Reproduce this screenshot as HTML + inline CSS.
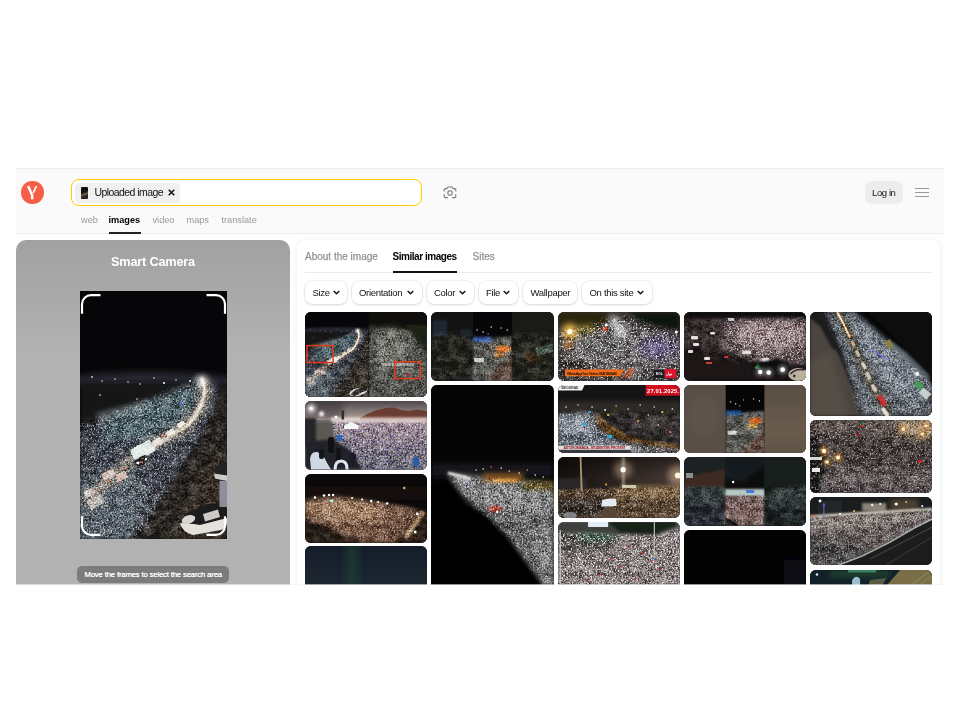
<!DOCTYPE html>
<html lang="en">
<head>
<meta charset="utf-8">
<title>Yandex Images</title>
<style>
*{box-sizing:border-box;margin:0;padding:0}
button{border:0;font-family:inherit;text-align:left;cursor:pointer;-webkit-appearance:none;appearance:none;display:block}
a{text-decoration:none;display:block}
html,body{width:960px;height:720px;overflow:hidden;background:#fff}
body{font-family:"Liberation Sans",sans-serif;color:#000;position:relative}
.abs{position:absolute}
#shot{position:absolute;left:16px;top:168px;width:928px;height:417px;background:#fff;overflow:hidden}
#header{position:absolute;left:0;top:0;width:928px;height:66px;background:#fafafa;box-shadow:inset 0 1px 0 #ececec,inset 0 -1px 0 #ececec}
#logo{position:absolute;left:5.4px;top:13.4px;width:22.4px;height:22.4px;border-radius:50%;background:#f75e48}
#search{position:absolute;left:55px;top:11px;width:350.5px;height:27px;border:1.8px solid #ffcc00;border-radius:8px;background:#fff}
#chip{position:absolute;left:59px;top:15px;width:105px;height:19.5px;border-radius:4px;background:#f0f0f0}
#chip .th{position:absolute;left:5.5px;top:3.5px;width:7.5px;height:12.5px;background:linear-gradient(160deg,#111 40%,#6a5a4a 60%,#222 75%);border-radius:1px}
#chip .tx{position:absolute;left:19.5px;top:3px;font-size:10.5px;line-height:12px;letter-spacing:-0.57px;white-space:nowrap;color:#111}
#chip .x{position:absolute;left:93px;top:5.5px;width:7px;height:7px}
.nav{position:absolute;top:46px;font-size:9.2px;line-height:12px;color:#999;white-space:nowrap}
.nav.on{color:#000;font-weight:bold}
#navline{position:absolute;left:92.5px;top:63.7px;width:32px;height:2px;background:#222}
#cam{position:absolute;left:427px;top:17.5px;width:14px;height:13px}
#login{position:absolute;left:848.5px;top:13px;width:38.5px;height:22.5px;border-radius:7px;background:#ededed;font-size:9.5px;line-height:23.5px;text-align:center;letter-spacing:-0.4px;color:#111}
.hb{position:absolute;left:899px;width:13.5px;height:1.2px;background:#999}
#left{position:absolute;left:0;top:72px;width:274px;height:345px;border-radius:10px 10px 0 0;background:linear-gradient(#a1a1a1 0,#b2b2b2 112px,#b2b2b2 100%)}
#left h1{position:absolute;left:0;width:274px;top:14px;text-align:center;font-size:12.7px;line-height:16px;font-weight:bold;color:#fff;letter-spacing:-0.18px}
#photo{position:absolute;left:64px;top:51px;width:147px;height:248px;background:#0a0a0c;overflow:hidden}
#tip{position:absolute;left:61px;top:326px;width:152.4px;height:17px;border-radius:5px;background:#7c7c7c;color:#fff;font-size:7.7px;line-height:17px;text-align:center;white-space:nowrap;letter-spacing:-0.15px;text-shadow:0 0 .4px #fff}
#right{position:absolute;left:281px;top:72px;width:643px;height:360px;border-radius:9px 9px 0 0;background:#fff;box-shadow:0 0 5px rgba(40,70,120,.10)}
.tab{position:absolute;top:11.2px;font-size:10px;line-height:12px;color:#929292;white-space:nowrap;-webkit-text-stroke:.25px #929292}
.tab.on{color:#000;font-weight:bold;letter-spacing:-0.46px;-webkit-text-stroke:0}
#tabline{position:absolute;left:95.5px;top:30.5px;width:64.5px;height:2px;background:#111}
#divider{position:absolute;left:8px;top:31.7px;width:627px;height:1px;background:#ebebeb}
.f{position:absolute;top:41.2px;height:23px;border-radius:7px;background:#fff;box-shadow:0 0 0 .5px rgba(0,0,0,.08),0 1px 3px rgba(0,0,0,.12);font-size:9.5px;line-height:22px;white-space:nowrap;color:#111;letter-spacing:-0.3px;padding-left:7.5px}
.f svg{position:absolute;right:7.5px;top:8.6px;width:7px;height:5px}
#botline{position:absolute;left:0;bottom:0;width:928px;height:1px;background:rgba(238,243,251,.62)}
.im{position:absolute;width:122.3px;border-radius:6px;overflow:hidden;background:#181818}
</style>
</head>
<body>

<svg width="0" height="0" style="position:absolute;left:0;top:0" aria-hidden="true">
<defs>
<filter id="b05" x="-50%" y="-50%" width="200%" height="200%"><feGaussianBlur stdDeviation="0.5"/></filter>
<filter id="b1" x="-50%" y="-50%" width="200%" height="200%"><feGaussianBlur stdDeviation="1"/></filter>
<filter id="b2" x="-50%" y="-50%" width="200%" height="200%"><feGaussianBlur stdDeviation="2"/></filter>
<filter id="b3" x="-50%" y="-50%" width="200%" height="200%"><feGaussianBlur stdDeviation="3"/></filter>
<filter id="b5" x="-60%" y="-60%" width="220%" height="220%"><feGaussianBlur stdDeviation="5"/></filter>
<filter id="b8" x="-80%" y="-80%" width="260%" height="260%"><feGaussianBlur stdDeviation="8"/></filter>
<filter id="nz" x="0" y="0" width="100%" height="100%" color-interpolation-filters="sRGB"><feTurbulence type="fractalNoise" baseFrequency="0.62" numOctaves="2" seed="4"/><feColorMatrix values="1.9 0 0 0 -0.45  1.9 0 0 0 -0.45  1.9 0 0 0 -0.45  0 0 0 0 1"/><feGaussianBlur stdDeviation="0.45"/></filter>
<filter id="sp" x="0" y="0" width="100%" height="100%" color-interpolation-filters="sRGB"><feTurbulence type="fractalNoise" baseFrequency="0.55" numOctaves="2" seed="9"/><feColorMatrix values="0 0 0 0 1  0 0 0 0 1  0 0 0 0 1  9 0 0 0 -5.15"/><feGaussianBlur stdDeviation="0.6"/></filter>
<filter id="nzc" x="0" y="0" width="100%" height="100%" color-interpolation-filters="sRGB"><feTurbulence type="fractalNoise" baseFrequency="0.6" numOctaves="2" seed="17"/><feColorMatrix values="1.7 0.3 0 0 -0.55  1.5 0.5 0 0 -0.56  1.25 0 0.85 0 -0.58  0 0 0 0 1"/><feGaussianBlur stdDeviation="0.45"/></filter>
<filter id="nzl" x="0" y="0" width="100%" height="100%" color-interpolation-filters="sRGB"><feTurbulence type="fractalNoise" baseFrequency="0.11 0.16" numOctaves="2" seed="31"/><feColorMatrix values="2.6 0 0 0 -0.8  2.6 0 0 0 -0.8  2.6 0 0 0 -0.8  0 0 0 0 1"/></filter>
<filter id="nz2" x="0" y="0" width="100%" height="100%" color-interpolation-filters="sRGB"><feTurbulence type="fractalNoise" baseFrequency="0.5" numOctaves="2" seed="11"/><feColorMatrix values="3.2 0 0 0 -1.1  3.2 0 0 0 -1.1  3.2 0 0 0 -1.1  0 0 0 0 1"/></filter>
<filter id="nz3" x="0" y="0" width="100%" height="100%" color-interpolation-filters="sRGB"><feTurbulence type="fractalNoise" baseFrequency="0.7" numOctaves="2" seed="23"/><feColorMatrix values="1.9 0 0 0 -0.45  1.9 0 0 0 -0.45  1.9 0 0 0 -0.45  0 0 0 0 1"/><feGaussianBlur stdDeviation="0.45"/></filter>
</defs>
</svg>

<div id="shot">
  <header id="header">
    <div id="logo"><svg viewBox="0 0 22.6 22.6" width="22.4" height="22.4" style="display:block"><path d="M7.2 5.1 L11.25 14.5 L11.25 18.5" fill="none" stroke="#fff" stroke-width="2.5" stroke-linejoin="miter"/><path d="M15.6 5.2 L12.3 11.9" fill="none" stroke="#fff" stroke-width="1.75"/></svg></div>
    <div id="search"></div>
    <div id="chip"><div class="th"></div><div class="tx">Uploaded image</div>
      <svg class="x" viewBox="0 0 7 7"><path d="M.7 .7 L6.3 6.3 M6.3 .7 L.7 6.3" stroke="#111" stroke-width="1.5" fill="none"/></svg></div>
    <a class="nav" style="left:65px">web</a>
    <a class="nav on" style="left:92.5px">images</a>
    <a class="nav" style="left:136.5px">video</a>
    <a class="nav" style="left:170.5px">maps</a>
    <a class="nav" style="left:205.5px">translate</a>
    <div id="navline"></div>
    <svg id="cam" viewBox="0 0 14 13"><g fill="none" stroke="#777" stroke-width="1.1" stroke-linecap="round" stroke-linejoin="round"><path d="M1.2 5 V3.8 Q1.2 2.6 2.4 2.6 H3.8 L5 1 H9 L10.2 2.6 H11.6 Q12.8 2.6 12.8 3.8 V5"/><path d="M1.2 8.6 V10.4 Q1.2 11.6 2.4 11.6 H4.4"/><path d="M12.8 8.6 V10.4 Q12.8 11.6 11.6 11.6 H9.6"/><circle cx="7" cy="7" r="2.2"/></g></svg>
    <button id="login" type="button">Log in</button>
    <div class="hb" style="top:19.8px"></div><div class="hb" style="top:24px"></div><div class="hb" style="top:28.2px"></div>
  </header>
  <section id="left">
    <h1>Smart Camera</h1>
    <div id="photo"><svg viewBox="0 0 147 248" width="147" height="248" preserveAspectRatio="none" ><rect width="147" height="248" fill="#060608"/><ellipse cx="70" cy="90" rx="85" ry="9" fill="#262830" filter="url(#b3)"/><rect x="0" y="92" width="120" height="45" fill="#121418" filter="url(#b2)"/><polygon points="0,138 30,128 66,114 100,98 120,88 136,92 140,110 130,132 118,152 100,178 80,205 62,248 0,248" fill="#383d47" filter="url(#b3)"/><polygon points="30,126 100,98 118,96 112,120 70,148 20,150" fill="#4b646b" filter="url(#b3)" opacity=".8"/><polygon points="16,122 70,108 74,117 20,132" fill="#7c888c" filter="url(#b2)" opacity=".55"/><polygon points="0,190 50,176 70,200 52,248 0,248" fill="#59636b" filter="url(#b3)" opacity=".8"/><polygon points="147,96 147,248 52,248 72,216 98,182 120,150 136,116 140,98" fill="#2b2521" filter="url(#b2)"/><polygon points="147,150 147,248 90,248 110,200" fill="#3a332c" filter="url(#b3)" opacity=".8"/><path d="M128,100 L122,128 L104,160 L82,192 L60,235" stroke="#3c4048" stroke-width="10" fill="none" filter="url(#b2)"/><path d="M121,88 Q130,100 118,120 T88,146 T50,170 T4,212" stroke="#a39684" stroke-width="11" fill="none" filter="url(#b3)" opacity=".75"/><path d="M121,87 Q129,99 119,118 T100,138" stroke="#fff6e6" stroke-width="3.2" fill="none" filter="url(#b1)"/><path d="M100,138 Q88,148 70,158" stroke="#e8dccb" stroke-width="4" fill="none" filter="url(#b1)" opacity=".9"/><circle cx="121" cy="90" r="5" fill="#fff" filter="url(#b3)" opacity=".9"/><circle cx="12" cy="86" r="0.9" fill="#cfd6e6"/><circle cx="22" cy="90" r="0.8" fill="#e8e0c8"/><circle cx="35" cy="88" r="0.7" fill="#fff"/><circle cx="48" cy="91" r="0.8" fill="#d8e0ff"/><circle cx="60" cy="93" r="0.8" fill="#ffe8c0"/><circle cx="74" cy="87" r="0.7" fill="#fff"/><circle cx="84" cy="92" r="1" fill="#fff"/><circle cx="96" cy="89" r="0.8" fill="#ffe0c0"/><circle cx="110" cy="90" r="1" fill="#fff"/><circle cx="101" cy="112" r="1.2" fill="#6a7cff"/><circle cx="78" cy="118" r="1" fill="#fff"/><circle cx="57" cy="108" r="0.8" fill="#ffd8a0"/><circle cx="20" cy="104" r="0.8" fill="#fff"/><circle cx="38" cy="120" r="0.8" fill="#fff"/><rect x="51" y="153" width="23" height="13" rx="1.5" fill="#dfe9e4" transform="rotate(-30 62.5 159.5)" filter="url(#b05)"/><rect x="55" y="166" width="13" height="8" rx="1.5" fill="#1a1e1e" transform="rotate(-30 61.5 170.0)" filter="url(#b05)"/><rect x="22" y="180" width="13" height="7" rx="1.5" fill="#d8c4bc" transform="rotate(-25 28.5 183.5)" filter="url(#b05)"/><rect x="36" y="182" width="11" height="7" rx="1.5" fill="#d0b8b0" transform="rotate(-25 41.5 185.5)" filter="url(#b05)"/><rect x="4" y="198" width="11" height="7" rx="1.5" fill="#c4bcb8" transform="rotate(-25 9.5 201.5)" filter="url(#b05)"/><rect x="8" y="206" width="16" height="10" rx="1.5" fill="#b8b4b0" transform="rotate(-30 16.0 211.0)" filter="url(#b05)"/><rect x="72" y="148" width="10" height="6" rx="1.5" fill="#e8e4dc" transform="rotate(-30 77.0 151.0)" filter="url(#b05)"/><rect x="86" y="139" width="9" height="5" rx="1.5" fill="#efe9e0" transform="rotate(-32 90.5 141.5)" filter="url(#b05)"/><rect x="97" y="131" width="8" height="5" rx="1.5" fill="#f4eee4" transform="rotate(-35 101.0 133.5)" filter="url(#b05)"/><circle cx="28" cy="190" r="1.1" fill="#ff5a48"/><circle cx="40" cy="192" r="1.1" fill="#ff5a48"/><circle cx="44" cy="178" r="1.1" fill="#ff5a48"/><circle cx="62" cy="171" r="1.1" fill="#ff5a48"/><circle cx="82" cy="145" r="1.1" fill="#ff5a48"/><circle cx="16" cy="200" r="1.1" fill="#ff5a48"/><circle cx="58" cy="172" r="1.4" fill="#fff"/><circle cx="66" cy="168" r="1.2" fill="#fff"/><mask id="nm19" maskUnits="userSpaceOnUse" x="-10" y="-10" width="400" height="400"><g fill="#fff" stroke="#fff" stroke-width="0" filter="url(#b3)"><polygon points="0,132 40,120 100,96 124,88 138,100 126,140 96,182 60,248 0,248"/></g></mask><g mask="url(#nm19)" style="mix-blend-mode:overlay" opacity="0.648"><rect width="100%" height="100%" filter="url(#nz)"/></g><g mask="url(#nm19)" style="mix-blend-mode:soft-light" opacity="0.45"><rect width="100%" height="100%" filter="url(#nzl)"/></g><g mask="url(#nm19)" opacity="0.5"><rect width="100%" height="100%" filter="url(#sp)"/></g><mask id="nm20" maskUnits="userSpaceOnUse" x="-10" y="-10" width="400" height="400"><g fill="#fff" stroke="#fff" stroke-width="0" filter="url(#b3)"><polygon points="147,96 147,248 52,248 98,182 136,116"/></g></mask><g mask="url(#nm20)" style="mix-blend-mode:overlay" opacity="0.504"><rect width="100%" height="100%" filter="url(#nz2)"/></g><g mask="url(#nm20)" style="mix-blend-mode:soft-light" opacity="0.45"><rect width="100%" height="100%" filter="url(#nzl)"/></g><g filter="url(#b05)"><path d="M100,232 Q102,241 113,244 L141,239 Q147,237 147,231 L147,226 L120,233 Z" fill="#e4e0dc"/><path d="M101,231 Q104,221 116,218 L128,213 Q138,211 147,215 L147,227 L120,234 Z" fill="#1e1c1e"/><ellipse cx="108.500" cy="228.500" rx="7" ry="4.2" transform="rotate(-18 108.5 228.5)" fill="#d8d4d0"/><path d="M123,223 L138,218.500 L140,226 L125,230.500 Z" fill="#cfcac6"/><path d="M134,179 Q138,172 147,171 L147,188 L136,186 Z" fill="#242224"/><path d="M134,182.500 L147,184.500 L147,190 L135,187.500 Z" fill="#d0ccc8"/><rect x="139.500" y="190" width="8" height="26" fill="#9a98a6" opacity=".9"/></g><path d="M2,22.8 V13 A9 9 0 0 1 11,4.2 H20.5" fill="none" stroke="#fff" stroke-width="2.2" stroke-linecap="butt"/><path d="M126.5,4.2 H136 A9 9 0 0 1 145,13 V22.8" fill="none" stroke="#fff" stroke-width="2.2" stroke-linecap="butt"/><path d="M2,225.2 V235 A9 9 0 0 0 11,243.8 H20.5" fill="none" stroke="#fff" stroke-width="2.2" stroke-linecap="butt"/><path d="M126.5,243.8 H136 A9 9 0 0 0 145,235 V225.2" fill="none" stroke="#fff" stroke-width="2.2" stroke-linecap="butt"/></svg></div>
    <div id="tip">Move the frames to select the search area</div>
  </section>
  <main id="right">
    <a class="tab" style="left:8px">About the image</a>
    <a class="tab on" style="left:95.5px">Similar images</a>
    <a class="tab" style="left:175.5px">Sites</a>
    <div id="divider"></div><div id="tabline"></div>
    <button class="f" type="button" style="left:8px;width:42px">Size<svg viewBox="0 0 7 5"><path d="M.7 .9 L3.5 3.8 L6.3 .9" fill="none" stroke="#111" stroke-width="1.4"/></svg></button>
    <button class="f" type="button" style="left:54.5px;width:70px">Orientation<svg viewBox="0 0 7 5"><path d="M.7 .9 L3.5 3.8 L6.3 .9" fill="none" stroke="#111" stroke-width="1.4"/></svg></button>
    <button class="f" type="button" style="left:129.5px;width:47px">Color<svg viewBox="0 0 7 5"><path d="M.7 .9 L3.5 3.8 L6.3 .9" fill="none" stroke="#111" stroke-width="1.4"/></svg></button>
    <button class="f" type="button" style="left:181.5px;width:39px">File<svg viewBox="0 0 7 5"><path d="M.7 .9 L3.5 3.8 L6.3 .9" fill="none" stroke="#111" stroke-width="1.4"/></svg></button>
    <button class="f" type="button" style="left:226px;width:53.5px">Wallpaper</button>
    <button class="f" type="button" style="left:285px;width:69.5px">On this site<svg viewBox="0 0 7 5"><path d="M.7 .9 L3.5 3.8 L6.3 .9" fill="none" stroke="#111" stroke-width="1.4"/></svg></button>
<div class="im" style="left:8px;top:72px;height:85.3px"><svg viewBox="0 0 122 85.3" width="122" height="85.3" preserveAspectRatio="none" style="display:block;width:122.3px;height:85.3px"><rect width="122" height="85.5" fill="#0b0b0d"/><svg x="0" y="0" width="63.5" height="85.5" viewBox="0 46 147 198" preserveAspectRatio="xMidYMid slice"><rect width="147" height="248" fill="#060608"/><ellipse cx="70" cy="90" rx="85" ry="9" fill="#262830" filter="url(#b3)"/><rect x="0" y="92" width="120" height="45" fill="#121418" filter="url(#b2)"/><polygon points="0,138 30,128 66,114 100,98 120,88 136,92 140,110 130,132 118,152 100,178 80,205 62,248 0,248" fill="#383d47" filter="url(#b3)"/><polygon points="30,126 100,98 118,96 112,120 70,148 20,150" fill="#4b646b" filter="url(#b3)" opacity=".8"/><polygon points="16,122 70,108 74,117 20,132" fill="#7c888c" filter="url(#b2)" opacity=".55"/><polygon points="0,190 50,176 70,200 52,248 0,248" fill="#59636b" filter="url(#b3)" opacity=".8"/><polygon points="147,96 147,248 52,248 72,216 98,182 120,150 136,116 140,98" fill="#2b2521" filter="url(#b2)"/><polygon points="147,150 147,248 90,248 110,200" fill="#3a332c" filter="url(#b3)" opacity=".8"/><path d="M128,100 L122,128 L104,160 L82,192 L60,235" stroke="#3c4048" stroke-width="10" fill="none" filter="url(#b2)"/><path d="M121,88 Q130,100 118,120 T88,146 T50,170 T4,212" stroke="#a39684" stroke-width="11" fill="none" filter="url(#b3)" opacity=".75"/><path d="M121,87 Q129,99 119,118 T100,138" stroke="#fff6e6" stroke-width="3.2" fill="none" filter="url(#b1)"/><path d="M100,138 Q88,148 70,158" stroke="#e8dccb" stroke-width="4" fill="none" filter="url(#b1)" opacity=".9"/><circle cx="121" cy="90" r="5" fill="#fff" filter="url(#b3)" opacity=".9"/><circle cx="12" cy="86" r="0.9" fill="#cfd6e6"/><circle cx="22" cy="90" r="0.8" fill="#e8e0c8"/><circle cx="35" cy="88" r="0.7" fill="#fff"/><circle cx="48" cy="91" r="0.8" fill="#d8e0ff"/><circle cx="60" cy="93" r="0.8" fill="#ffe8c0"/><circle cx="74" cy="87" r="0.7" fill="#fff"/><circle cx="84" cy="92" r="1" fill="#fff"/><circle cx="96" cy="89" r="0.8" fill="#ffe0c0"/><circle cx="110" cy="90" r="1" fill="#fff"/><circle cx="101" cy="112" r="1.2" fill="#6a7cff"/><circle cx="78" cy="118" r="1" fill="#fff"/><circle cx="57" cy="108" r="0.8" fill="#ffd8a0"/><circle cx="20" cy="104" r="0.8" fill="#fff"/><circle cx="38" cy="120" r="0.8" fill="#fff"/><rect x="51" y="153" width="23" height="13" rx="1.5" fill="#dfe9e4" transform="rotate(-30 62.5 159.5)" filter="url(#b05)"/><rect x="55" y="166" width="13" height="8" rx="1.5" fill="#1a1e1e" transform="rotate(-30 61.5 170.0)" filter="url(#b05)"/><rect x="22" y="180" width="13" height="7" rx="1.5" fill="#d8c4bc" transform="rotate(-25 28.5 183.5)" filter="url(#b05)"/><rect x="36" y="182" width="11" height="7" rx="1.5" fill="#d0b8b0" transform="rotate(-25 41.5 185.5)" filter="url(#b05)"/><rect x="4" y="198" width="11" height="7" rx="1.5" fill="#c4bcb8" transform="rotate(-25 9.5 201.5)" filter="url(#b05)"/><rect x="8" y="206" width="16" height="10" rx="1.5" fill="#b8b4b0" transform="rotate(-30 16.0 211.0)" filter="url(#b05)"/><rect x="72" y="148" width="10" height="6" rx="1.5" fill="#e8e4dc" transform="rotate(-30 77.0 151.0)" filter="url(#b05)"/><rect x="86" y="139" width="9" height="5" rx="1.5" fill="#efe9e0" transform="rotate(-32 90.5 141.5)" filter="url(#b05)"/><rect x="97" y="131" width="8" height="5" rx="1.5" fill="#f4eee4" transform="rotate(-35 101.0 133.5)" filter="url(#b05)"/><circle cx="28" cy="190" r="1.1" fill="#ff5a48"/><circle cx="40" cy="192" r="1.1" fill="#ff5a48"/><circle cx="44" cy="178" r="1.1" fill="#ff5a48"/><circle cx="62" cy="171" r="1.1" fill="#ff5a48"/><circle cx="82" cy="145" r="1.1" fill="#ff5a48"/><circle cx="16" cy="200" r="1.1" fill="#ff5a48"/><circle cx="58" cy="172" r="1.4" fill="#fff"/><circle cx="66" cy="168" r="1.2" fill="#fff"/><ellipse cx="123" cy="231" rx="21" ry="9" transform="rotate(-14 123 231)" fill="#d9d6d2"/><path d="M106,236 Q118,222 140,218 L146,226 Q130,232 112,242 Z" fill="#2a2626"/></svg><rect x="63.5" y="0" width="58.5" height="85.5" fill="#100e0c"/><polygon points="63.5,17 122,17 122,85.5 63.5,85.5" fill="#4e4e48" filter="url(#b1)"/><polygon points="74,16 94,16 104,40 100,66 72,56 68,30" fill="#787870" filter="url(#b3)" opacity=".7"/><polygon points="100,13 122,13 122,44 112,30" fill="#1c2418" filter="url(#b1)"/><polygon points="63.5,13 72,13 66,24 63.5,28" fill="#2a2a26" filter="url(#b1)"/><rect x="63" y="0" width="1" height="85.5" fill="#0a0a0a" opacity=".6"/><mask id="nm1" maskUnits="userSpaceOnUse" x="-10" y="-10" width="400" height="400"><g fill="#fff" stroke="#fff" stroke-width="0" filter="url(#b2)"><polygon points="0,36 20,32 52,18 63.5,20 63.5,85.5 0,85.5"/><polygon points="63.5,17 104,16 122,40 122,85.5 63.5,85.5"/></g></mask><g mask="url(#nm1)" style="mix-blend-mode:overlay" opacity="0.576"><rect width="100%" height="100%" filter="url(#nz)"/></g><g mask="url(#nm1)" style="mix-blend-mode:soft-light" opacity="0.45"><rect width="100%" height="100%" filter="url(#nzl)"/></g><g mask="url(#nm1)" opacity="0.25"><rect width="100%" height="100%" filter="url(#sp)"/></g><text x="76" y="54" font-size="3.2" font-weight="bold" fill="#fff" opacity=".7" font-family="Liberation Sans, sans-serif" textLength="33">THANK YOU VERY MUCH</text><rect x="2" y="33.6" width="26" height="17" fill="none" stroke="#e23a1c" stroke-width="1.5"/><rect x="89.500" y="49.800" width="25.600" height="16.800" fill="none" stroke="#e23a1c" stroke-width="1.5"/><ellipse cx="103" cy="62.500" rx="2.400" ry="1" fill="#b02030"/></svg></div>
<div class="im" style="left:8px;top:161.39999999999998px;height:68.6px"><svg viewBox="0 0 122 68.6" width="122" height="68.6" preserveAspectRatio="none" style="display:block;width:122.3px;height:68.6px"><defs><linearGradient id="g12" x1="0" y1="0" x2="0" y2="1"><stop offset="0" stop-color="#4e484c"/><stop offset="1" stop-color="#b4a49c"/></linearGradient><linearGradient id="g12b" x1="0" y1="0" x2="0" y2="1"><stop offset="0" stop-color="#a4929a"/><stop offset="1" stop-color="#686a76"/></linearGradient></defs><rect width="122" height="68.5" fill="#7a7880"/><rect width="122" height="19" fill="url(#g12)"/><rect x="-4" y="-4" width="42" height="22" fill="#322c30" opacity=".45" filter="url(#b3)"/><polygon points="55,17 62,13 72,9 80,7 88,6.500 96,9 104,10 112,8.500 122,10 122,22 55,22" fill="#6a3c30" filter="url(#b05)"/><rect x="26" y="20" width="96" height="49" fill="url(#g12b)"/><rect x="26" y="16.500" width="96" height="5" fill="#ece0dc" filter="url(#b1)" opacity=".85"/><rect x="36.400" y="9.500" width="2.600" height="9" fill="#2e2c2c"/><polygon points="8,21 28,21 30,45 8,45" fill="#5c5852" filter="url(#b1)"/><rect x="-2" y="17" width="13" height="28" fill="#26262a" filter="url(#b1)"/><polygon points="0,41 28,38 44,48 52,58 58,68.500 0,68.500" fill="#20242a" filter="url(#b1)"/><circle cx="6.200" cy="7.500" r="4.500" fill="#fff" filter="url(#b2)" opacity=".8"/><circle cx="6.200" cy="7.500" r="1.800" fill="#fff"/><circle cx="16.500" cy="12.800" r="2.600" fill="#fff" filter="url(#b1)" opacity=".9"/><circle cx="31" cy="16" r="1.600" fill="#fff" filter="url(#b05)"/><mask id="nm2" maskUnits="userSpaceOnUse" x="-10" y="-10" width="400" height="400"><g fill="#fff" stroke="#fff" stroke-width="0" filter="url(#b1)"><polygon points="27,21 122,20 122,68.500 56,68.500 44,48 29,40"/></g></mask><g mask="url(#nm2)" style="mix-blend-mode:overlay" opacity="0.72"><rect width="100%" height="100%" filter="url(#nzc)"/></g><g mask="url(#nm2)" style="mix-blend-mode:soft-light" opacity="0.45"><rect width="100%" height="100%" filter="url(#nzl)"/></g><g mask="url(#nm2)" opacity="0.35"><rect width="100%" height="100%" filter="url(#sp)"/></g><polygon points="39,24.500 46,21 53.500,24.500 53.500,28 39,28" fill="#f4f4f6"/><path d="M5,58 Q6,50 12,51 L18,54 L22,62 L26,68.500 L6,68.500 Z" fill="#cfd8e4"/><path d="M30,68.500 Q30,60 36,60 Q42,60 42,68.500" fill="none" stroke="#dfe6ee" stroke-width="3"/><rect x="23" y="36" width="6" height="16" rx="2.500" fill="#0e1012"/><rect x="14" y="48" width="5" height="10" rx="2" fill="#14161a"/><rect x="31" y="47" width="5" height="12" rx="2" fill="#121416"/><rect x="44" y="52" width="7" height="14" rx="2.500" fill="#1a1e24"/><rect x="108" y="56" width="6" height="9" rx="2" fill="#2a5aa8" filter="url(#b05)"/><rect x="32" y="34" width="5" height="6" fill="#2a6ab8" filter="url(#b05)"/></svg></div>
<div class="im" style="left:8px;top:234px;height:68.6px"><svg viewBox="0 0 122 68.6" width="122" height="68.6" preserveAspectRatio="none" style="display:block;width:122.3px;height:68.6px"><rect width="122" height="68.6" fill="#0c0a09"/><rect x="0" y="12" width="122" height="14" fill="#15110e" filter="url(#b2)"/><polygon points="0,26 30,22 88,30 122,36 122,68.6 0,68.6" fill="#2c1e16" filter="url(#b1)"/><polygon points="0,27 30,23 88,31 114,37 104,54 90,68.6 56,68.6 24,54 0,46" fill="#6e503c" filter="url(#b2)"/><polygon points="2,28 34,25 80,32 70,48 30,46 4,40" fill="#b08c6c" filter="url(#b3)" opacity=".75"/><polygon points="0,50 20,56 40,68.6 0,68.6" fill="#241a14" filter="url(#b2)"/><path d="M118,38 L100,64" stroke="#c8a47a" stroke-width="4" filter="url(#b1)" opacity=".9"/><mask id="nm3" maskUnits="userSpaceOnUse" x="-10" y="-10" width="400" height="400"><g fill="#fff" stroke="#fff" stroke-width="0" filter="url(#b2)"><polygon points="0,26 30,22 122,35 122,68.6 0,68.6"/></g></mask><g mask="url(#nm3)" style="mix-blend-mode:overlay" opacity="0.576"><rect width="100%" height="100%" filter="url(#nz)"/></g><g mask="url(#nm3)" style="mix-blend-mode:soft-light" opacity="0.45"><rect width="100%" height="100%" filter="url(#nzl)"/></g><mask id="nm4" maskUnits="userSpaceOnUse" x="-10" y="-10" width="400" height="400"><g fill="#fff" stroke="#fff" stroke-width="0" filter="url(#b2)"><polygon points="0,27 30,23 88,31 114,37 104,54 90,66 56,66 24,54 0,46"/></g></mask><g mask="url(#nm4)" style="mix-blend-mode:overlay" opacity="0.0"><rect width="100%" height="100%" filter="url(#nz)"/></g><g mask="url(#nm4)" style="mix-blend-mode:soft-light" opacity="0"><rect width="100%" height="100%" filter="url(#nzl)"/></g><g mask="url(#nm4)" opacity="0.4"><rect width="100%" height="100%" filter="url(#sp)"/></g><circle cx="10" cy="23.5" r="1.3" fill="#fff" filter="url(#b05)"/><circle cx="19" cy="21.5" r="1.3" fill="#fff" filter="url(#b05)"/><circle cx="24" cy="21" r="1.2" fill="#fff" filter="url(#b05)"/><circle cx="28" cy="21" r="1.2" fill="#fff" filter="url(#b05)"/><circle cx="47" cy="24" r="1.1" fill="#fff" filter="url(#b05)"/><circle cx="57" cy="25.5" r="1.1" fill="#fff" filter="url(#b05)"/><circle cx="66" cy="27" r="1.2" fill="#fff" filter="url(#b05)"/><circle cx="73" cy="28" r="1.1" fill="#fff" filter="url(#b05)"/><circle cx="82" cy="29.5" r="1.3" fill="#fff" filter="url(#b05)"/><circle cx="112" cy="40" r="1.4" fill="#fff" filter="url(#b05)"/><circle cx="110" cy="58" r="1.4" fill="#fff" filter="url(#b05)"/><circle cx="99" cy="14" r="1.2" fill="#e8b860" filter="url(#b05)"/><rect x="25" y="26" width="3" height="2" fill="#9fe"/></svg></div>
<div class="im" style="left:8px;top:306.20000000000005px;height:49.8px"><svg viewBox="0 0 122 49.8" width="122" height="49.8" preserveAspectRatio="none" style="display:block;width:122.3px;height:49.8px"><defs><linearGradient id="g14" x1="0" y1="0" x2="0" y2="1"><stop offset="0" stop-color="#141c29"/><stop offset="1" stop-color="#1d2731"/></linearGradient></defs><rect width="122" height="40" fill="url(#g14)"/><rect x="40" y="-6" width="14" height="52" fill="#1a4a38" opacity=".5" filter="url(#b3)"/></svg></div>
<div class="im" style="left:134.25px;top:72px;height:68.8px"><svg viewBox="0 0 122 68.8" width="122" height="68.8" preserveAspectRatio="none" style="display:block;width:122.3px;height:68.8px"><rect width="122" height="68.8" fill="#121312"/><rect x="0" y="20" width="42" height="49" fill="#20221f" filter="url(#b2)"/><rect x="2" y="8" width="14" height="16" fill="#263040" filter="url(#b1)" opacity=".7"/><rect x="30" y="17" width="10" height="9" fill="#242e38" filter="url(#b1)" opacity=".7"/><rect x="42" y="0" width="39" height="68.8" fill="#070709"/><polygon points="42,28 81,24 81,68.8 42,68.8" fill="#5c5c58" filter="url(#b1)"/><polygon points="81,44 81,68.8 54,68.8 68,54" fill="#5e4c42" filter="url(#b1)"/><rect x="42" y="25" width="18" height="5" fill="#3a5ea8" filter="url(#b1)"/><ellipse cx="72" cy="37" rx="8" ry="3.5" fill="#f08030" filter="url(#b1)" opacity=".9"/><ellipse cx="68" cy="43" rx="5" ry="2" fill="#f0a040" filter="url(#b1)" opacity=".8"/><rect x="43" y="46" width="10" height="4" fill="#b8c8c0" filter="url(#b05)"/><rect x="81" y="0" width="41" height="68.8" fill="#1a1a17"/><rect x="81" y="22" width="41" height="47" fill="#24221e" filter="url(#b2)"/><polygon points="104,36 121,32 122,40 106,44" fill="#4a5a50" filter="url(#b05)"/><rect x="84" y="41" width="10" height="5" fill="#3a3e3a" filter="url(#b05)"/><ellipse cx="100" cy="46" rx="8" ry="4" fill="#5a3a20" filter="url(#b2)" opacity=".8"/><mask id="nm5" maskUnits="userSpaceOnUse" x="-10" y="-10" width="400" height="400"><g fill="#fff" stroke="#fff" stroke-width="0" filter="url(#b2)"><polygon points="0,22 42,22 42,27 81,23 122,20 122,68.8 0,68.8"/></g></mask><g mask="url(#nm5)" style="mix-blend-mode:overlay" opacity="0.576"><rect width="100%" height="100%" filter="url(#nz)"/></g><g mask="url(#nm5)" style="mix-blend-mode:soft-light" opacity="0.45"><rect width="100%" height="100%" filter="url(#nzl)"/></g><circle cx="46" cy="18" r=".7" fill="#dfe"/><circle cx="52" cy="20" r=".7" fill="#fff"/><circle cx="60" cy="15" r=".7" fill="#fff"/><circle cx="70" cy="16" r=".7" fill="#fdb"/><circle cx="76" cy="18" r=".7" fill="#fff"/><circle cx="57" cy="22" r=".7" fill="#88f"/></svg></div>
<div class="im" style="left:134.25px;top:144.7px;height:211.3px"><svg viewBox="0 0 122 211.3" width="122" height="211.3" preserveAspectRatio="none" style="display:block;width:122.3px;height:211.3px"><rect width="122" height="201" fill="#050505"/><rect x="0" y="78" width="122" height="14" fill="#15151a" filter="url(#b3)"/><polygon points="16,88 60,92 122,98 122,201 112,201 76,150 56,130 36,116 24,100" fill="#5e5e5e" filter="url(#b2)"/><polygon points="20,90 70,98 122,104 122,130 70,126 34,108" fill="#8a8a8a" filter="url(#b3)" opacity=".7"/><polygon points="96,150 122,140 122,201 118,201" fill="#8a8a8a" filter="url(#b3)" opacity=".6"/><path d="M17,88 L40,94" stroke="#fff" stroke-width="2.5" filter="url(#b1)"/><rect x="52" y="88" width="40" height="9" fill="#7a5020" filter="url(#b2)"/><rect x="62" y="94" width="24" height="3" fill="#e8a040" filter="url(#b1)"/><rect x="92" y="96" width="30" height="9" fill="#5a4a18" filter="url(#b2)" opacity=".9"/><ellipse cx="64" cy="124" rx="7" ry="3" fill="#c03020" filter="url(#b1)" opacity=".8"/><circle cx="66" cy="127" r="1.2" fill="#fff"/><circle cx="72" cy="129" r="1" fill="#fff"/><polygon points="0,100 14,96 22,104 30,118 40,124 54,132 70,150 110,201 0,201" fill="#040404" filter="url(#b1)"/><mask id="nm6" maskUnits="userSpaceOnUse" x="-10" y="-10" width="400" height="400"><g fill="#fff" stroke="#fff" stroke-width="0" filter="url(#b2)"><polygon points="16,90 122,98 122,201 112,201 76,150 36,116"/></g></mask><g mask="url(#nm6)" style="mix-blend-mode:overlay" opacity="0.612"><rect width="100%" height="100%" filter="url(#nz)"/></g><g mask="url(#nm6)" style="mix-blend-mode:soft-light" opacity="0.45"><rect width="100%" height="100%" filter="url(#nzl)"/></g><g mask="url(#nm6)" opacity="0.5"><rect width="100%" height="100%" filter="url(#sp)"/></g><circle cx="45" cy="85" r=".8" fill="#fc8"/><circle cx="52" cy="84" r=".8" fill="#fff"/><circle cx="70" cy="83" r=".8" fill="#fff"/><circle cx="78" cy="86" r=".8" fill="#fda"/><circle cx="88" cy="88" r=".8" fill="#fff"/><circle cx="96" cy="85" r=".8" fill="#f84"/><circle cx="104" cy="90" r=".8" fill="#fff"/><circle cx="112" cy="92" r=".8" fill="#ff8"/><circle cx="36" cy="98" r=".8" fill="#66f"/><circle cx="60" cy="82" r=".8" fill="#f66"/></svg></div>
<div class="im" style="left:260.5px;top:72px;height:69px"><svg viewBox="0 0 122 69" width="122" height="69" preserveAspectRatio="none" style="display:block;width:122.3px;height:69px"><rect width="122" height="68.8" fill="#3a3636"/><rect x="0" y="0" width="50" height="15" fill="#2a260c" filter="url(#b2)"/><ellipse cx="62" cy="40" rx="60" ry="26" fill="#6c6868" filter="url(#b5)" opacity=".85"/><polygon points="70,0 122,0 122,19 100,15 82,9" fill="#10140e" filter="url(#b2)"/><path d="M52,6 Q60,12 66,26" stroke="#eef4f4" stroke-width="7" fill="none" filter="url(#b3)" opacity=".9"/><ellipse cx="100" cy="36" rx="20" ry="11" fill="#5a4a8c" filter="url(#b5)" opacity=".55"/><polygon points="0,44 26,48 50,60 56,68.8 0,68.8" fill="#2c2624" filter="url(#b3)" opacity=".6"/><circle cx="12" cy="19.500" r="8" fill="#ffc450" filter="url(#b3)" opacity=".9"/><circle cx="12" cy="19.500" r="2.600" fill="#fffbe8" filter="url(#b05)"/><ellipse cx="28" cy="17" rx="10" ry="5" fill="#8a7a20" filter="url(#b3)" opacity=".7"/><circle cx="10" cy="33" r="4" fill="#e89030" filter="url(#b2)" opacity=".7"/><rect x="44" y="15" width="5" height="4" fill="#c83a20"/><circle cx="118" cy="20" r="1.6" fill="#fff" filter="url(#b05)"/><circle cx="48" cy="13" r="1.5" fill="#fff" filter="url(#b05)"/><mask id="nm7" maskUnits="userSpaceOnUse" x="-10" y="-10" width="400" height="400"><g fill="#fff" stroke="#fff" stroke-width="0" filter="url(#b2)"><polygon points="0,20 30,15 50,6 72,4 100,16 122,20 122,68.8 0,68.8"/></g></mask><g mask="url(#nm7)" style="mix-blend-mode:overlay" opacity="0.612"><rect width="100%" height="100%" filter="url(#nz)"/></g><g mask="url(#nm7)" style="mix-blend-mode:soft-light" opacity="0.45"><rect width="100%" height="100%" filter="url(#nzl)"/></g><g mask="url(#nm7)" opacity="0.7"><rect width="100%" height="100%" filter="url(#sp)"/></g><path d="M108,22 L112,52 M112,52 L122,46" stroke="#9aa" stroke-width=".8" fill="none"/><polygon points="7,57.6 66,57.6 62,64.2 7,64.2" fill="#f26a1c"/><text x="9" y="62.6" font-size="3.6" font-weight="bold" fill="#2a1408" font-family="Liberation Sans, sans-serif" textLength="50">WhatsApp Your Videos 0345 5869640</text><path d="M64,66 L72,56 M67,66 L75,56 M70,66 L76,58" stroke="#e8602a" stroke-width="1.2"/><rect x="95.5" y="57.5" width="11" height="8.5" fill="#1c1c22"/><text x="97.5" y="63.2" font-size="3.4" font-weight="bold" fill="#e8e8e8" font-family="Liberation Sans, sans-serif">BOL</text><rect x="106.5" y="57" width="11.5" height="9.2" fill="#e0142c"/><text x="108" y="63.5" font-size="4" font-weight="bold" fill="#fff" font-family="Liberation Sans, sans-serif">بول</text></svg></div>
<div class="im" style="left:260.5px;top:144.7px;height:68.6px"><svg viewBox="0 0 122 68.6" width="122" height="68.6" preserveAspectRatio="none" style="display:block;width:122.3px;height:68.6px"><rect width="122" height="68.6" fill="#141416"/><rect x="0" y="16" width="122" height="16" fill="#2e2a28" filter="url(#b2)"/><rect x="0" y="30" width="122" height="40" fill="#2a2828" filter="url(#b2)"/><polygon points="0,30 30,28 44,34 40,44 60,58 80,68.6 0,68.6" fill="#5e6672" filter="url(#b2)"/><polygon points="0,32 28,30 38,40 20,48 0,46" fill="#a8b0ba" filter="url(#b3)" opacity=".6"/><path d="M42,30 Q34,40 60,50 T122,62" stroke="#604424" stroke-width="5.500" fill="none" filter="url(#b1)"/><path d="M46,34 Q44,40 64,48" stroke="#c88838" stroke-width="1.500" fill="none" filter="url(#b1)"/><polygon points="60,34 122,30 122,56 90,48" fill="#3a3634" filter="url(#b2)"/><polygon points="50,56 80,60 122,66 122,68.600 60,68.600" fill="#74747a" filter="url(#b2)" opacity=".85"/><mask id="nm8" maskUnits="userSpaceOnUse" x="-10" y="-10" width="400" height="400"><g fill="#fff" stroke="#fff" stroke-width="0" filter="url(#b2)"><polygon points="0,26 122,26 122,68.6 0,68.6"/></g></mask><g mask="url(#nm8)" style="mix-blend-mode:overlay" opacity="0.576"><rect width="100%" height="100%" filter="url(#nz)"/></g><g mask="url(#nm8)" style="mix-blend-mode:soft-light" opacity="0.45"><rect width="100%" height="100%" filter="url(#nzl)"/></g><mask id="nm9" maskUnits="userSpaceOnUse" x="-10" y="-10" width="400" height="400"><g fill="#fff" stroke="#fff" stroke-width="0" filter="url(#b1)"><polygon points="0,29 30,27 44,34 40,44 60,56 122,64 122,68.6 0,68.6"/></g></mask><g mask="url(#nm9)" style="mix-blend-mode:overlay" opacity="0.0"><rect width="100%" height="100%" filter="url(#nz)"/></g><g mask="url(#nm9)" style="mix-blend-mode:soft-light" opacity="0"><rect width="100%" height="100%" filter="url(#nzl)"/></g><g mask="url(#nm9)" opacity="0.6"><rect width="100%" height="100%" filter="url(#sp)"/></g><circle cx="8" cy="22" r="0.8" fill="#fff"/><circle cx="20" cy="20" r="0.7" fill="#fda"/><circle cx="34" cy="22" r="0.8" fill="#fff"/><circle cx="47" cy="25" r="0.9" fill="#fff"/><circle cx="58" cy="21" r="0.8" fill="#fb6"/><circle cx="70" cy="24" r="0.7" fill="#fff"/><circle cx="82" cy="20" r="0.8" fill="#fda"/><circle cx="96" cy="22" r="0.7" fill="#fff"/><circle cx="104" cy="27" r="1" fill="#fc6"/><circle cx="114" cy="24" r="0.8" fill="#fff"/><circle cx="50" cy="30" r="1.1" fill="#fc4"/><circle cx="80" cy="36" r="1" fill="#fa4"/><circle cx="100" cy="40" r="0.8" fill="#fff"/><circle cx="112" cy="47" r="1" fill="#f84"/><circle cx="90" cy="30" r="0.7" fill="#fff"/><rect x="24" y="38" width="4" height="2.6" fill="#3ac"/><rect x="49" y="50" width="5" height="3.4" fill="#3ac"/><rect x="30" y="26" width="3" height="2" fill="#39c"/><polygon points="0,0 26.5,0 24,5.6 0,5.6" fill="#f2f2f2"/><text x="3.600" y="4.200" font-size="3.300" font-weight="bold" fill="#333" font-family="Liberation Sans, sans-serif">BEOGRAD</text><rect x="87.4" y="0" width="34.6" height="10.6" fill="#cf0f1e"/><text x="88.8" y="7.6" font-size="5.8" font-weight="bold" fill="#fff" font-family="Liberation Sans, sans-serif" textLength="32">27.01.2025.</text><rect x="0" y="60.600" width="72.500" height="4.300" fill="#e0dada"/><rect x="0" y="64.900" width="72.500" height="3.300" fill="#34323a" opacity=".9"/><text x="5.500" y="64" font-size="3.400" font-weight="bold" fill="#8a1018" font-family="Liberation Sans, sans-serif" textLength="62">AUTOKOMANDA - STUDENTSKI PROTEST</text></svg></div>
<div class="im" style="left:260.5px;top:217.39999999999998px;height:60.4px"><svg viewBox="0 0 122 60.4" width="122" height="60.4" preserveAspectRatio="none" style="display:block;width:122.3px;height:60.4px"><defs><linearGradient id="g33" x1="0" y1="0" x2="1" y2="0"><stop offset="0" stop-color="#15110f"/><stop offset=".5" stop-color="#2c2420"/><stop offset="1" stop-color="#483b37"/></linearGradient><linearGradient id="g33b" x1="0" y1="0" x2="0" y2="1"><stop offset="0" stop-color="#000" stop-opacity=".45"/><stop offset="1" stop-color="#000" stop-opacity="0"/></linearGradient></defs><rect width="122" height="60.4" fill="#4a3c2c"/><rect width="122" height="32" fill="url(#g33)"/><rect width="122" height="20" fill="url(#g33b)"/><rect x="0" y="21" width="29" height="11" fill="#2a2826" filter="url(#b1)"/><rect x="62" y="27" width="60" height="5" fill="#5a4a30" filter="url(#b1)"/><polygon points="0,33 122,31 122,60.400 0,60.400" fill="#56422e" filter="url(#b1)"/><polygon points="50,31 122,30 122,42 60,40" fill="#8a6e4c" filter="url(#b2)" opacity=".7"/><polygon points="0,42 40,40 58,60.400 0,60.400" fill="#2c2520" filter="url(#b2)" opacity=".85"/><circle cx="65" cy="12.700" r="9" fill="#b09880" filter="url(#b3)" opacity=".6"/><circle cx="119.500" cy="18.600" r="10" fill="#c0a080" filter="url(#b3)" opacity=".65"/><rect x="64" y="0" width="2.400" height="30" fill="#e8dcc8" filter="url(#b1)" opacity=".55"/><mask id="nm10" maskUnits="userSpaceOnUse" x="-10" y="-10" width="400" height="400"><g fill="#fff" stroke="#fff" stroke-width="0" filter="url(#b1)"><polygon points="0,32 122,30 122,60.400 0,60.400"/></g></mask><g mask="url(#nm10)" style="mix-blend-mode:overlay" opacity="0.576"><rect width="100%" height="100%" filter="url(#nz)"/></g><g mask="url(#nm10)" style="mix-blend-mode:soft-light" opacity="0.45"><rect width="100%" height="100%" filter="url(#nzl)"/></g><g mask="url(#nm10)" opacity="0.4"><rect width="100%" height="100%" filter="url(#sp)"/></g><path d="M21.600,0 L23.400,0 L24.600,33 L22.600,33 Z" fill="#a89070"/><circle cx="65" cy="12.700" r="2.700" fill="#fff" filter="url(#b05)"/><circle cx="119.500" cy="18.600" r="3" fill="#fff2dc" filter="url(#b05)"/><circle cx="48" cy="27.500" r="1" fill="#fa4"/><rect x="64" y="28" width="14" height="3" fill="#e8e8d0" filter="url(#b05)" opacity=".8"/><path d="M43.300,49.500 L44,43 Q51,40.500 58,42 L58.400,49 Z" fill="#e4eaf2"/><ellipse cx="51" cy="56" rx="8" ry="6" fill="#5a4636"/><ellipse cx="12" cy="58.500" rx="7" ry="3.500" fill="#9aa0a8" opacity=".7"/></svg></div>
<div class="im" style="left:260.5px;top:281.6px;height:74.4px"><svg viewBox="0 0 122 74.4" width="122" height="74.4" preserveAspectRatio="none" style="display:block;width:122.3px;height:74.4px"><rect width="122" height="64" fill="#7c7472"/><polygon points="0,8 64,10 54,26 30,30 0,30" fill="#3a3a38" filter="url(#b3)" opacity=".7"/><polygon points="0,0 122,0 122,8 100,13 60,12 20,10 0,12" fill="#3c403e" filter="url(#b1)"/><polygon points="50,0 118,0 118,7 100,12 62,10" fill="#182216" filter="url(#b1)"/><rect x="30" y="0" width="20" height="5" fill="#e4ecf4" filter="url(#b05)"/><rect x="22" y="11" width="32" height="8" fill="#3c6c54" filter="url(#b2)" opacity=".55"/><polygon points="100,12 122,4 122,20 104,22" fill="#8a8482" filter="url(#b2)"/><mask id="nm11" maskUnits="userSpaceOnUse" x="-10" y="-10" width="400" height="400"><g fill="#fff" stroke="#fff" stroke-width="0" filter="url(#b1)"><polygon points="0,10 60,12 100,13 122,6 122,64 0,64"/></g></mask><g mask="url(#nm11)" style="mix-blend-mode:overlay" opacity="0.612"><rect width="100%" height="100%" filter="url(#nz3)"/></g><g mask="url(#nm11)" style="mix-blend-mode:soft-light" opacity="0.45"><rect width="100%" height="100%" filter="url(#nzl)"/></g><g mask="url(#nm11)" opacity="0.75"><rect width="100%" height="100%" filter="url(#sp)"/></g><rect x="1.6" y="8" width="1.2" height="56" fill="#c8c8c8"/><rect x="95.5" y="0" width="1.2" height="36" fill="#b8b8b8"/><rect x="70" y="24" width="2" height="1.6" fill="#c8202c"/><rect x="84" y="30" width="2" height="1.6" fill="#c8202c"/><rect x="92" y="38" width="2" height="1.6" fill="#c8202c"/><rect x="60" y="44" width="2" height="1.6" fill="#c8202c"/><rect x="100" y="46" width="2" height="1.6" fill="#c8202c"/><rect x="40" y="52" width="2" height="1.6" fill="#c8202c"/><rect x="76" y="56" width="2" height="1.6" fill="#c8202c"/><rect x="28" y="58" width="2" height="1.6" fill="#c8202c"/><rect x="52" y="36" width="2" height="1.6" fill="#c8202c"/><rect x="96" y="36" width="2" height="2" fill="#36a"/></svg></div>
<div class="im" style="left:386.75px;top:72px;height:69px"><svg viewBox="0 0 122 69" width="122" height="69" preserveAspectRatio="none" style="display:block;width:122.3px;height:69px"><rect width="122" height="68.8" fill="#191315"/><polygon points="0,8 122,6 122,52 100,52 74,50 56,46 30,40 0,36" fill="#5c4e50" filter="url(#b2)"/><ellipse cx="86" cy="23" rx="38" ry="14" fill="#a48e92" filter="url(#b5)" opacity=".8"/><polygon points="0,6 40,6 36,30 30,42 0,38" fill="#241c1e" filter="url(#b3)" opacity=".7"/><rect x="0" y="0" width="122" height="5" fill="#0e0a0c" filter="url(#b1)"/><polygon points="0,34 30,40 64,48 72,68.8 0,68.8" fill="#1c1518" filter="url(#b3)"/><rect x="44" y="6" width="6" height="3" fill="#ccd" filter="url(#b05)"/><mask id="nm12" maskUnits="userSpaceOnUse" x="-10" y="-10" width="400" height="400"><g fill="#fff" stroke="#fff" stroke-width="0" filter="url(#b2)"><polygon points="0,7 122,6 122,52 60,52 0,40"/></g></mask><g mask="url(#nm12)" style="mix-blend-mode:overlay" opacity="0.612"><rect width="100%" height="100%" filter="url(#nz)"/></g><g mask="url(#nm12)" style="mix-blend-mode:soft-light" opacity="0.45"><rect width="100%" height="100%" filter="url(#nzl)"/></g><mask id="nm13" maskUnits="userSpaceOnUse" x="-10" y="-10" width="400" height="400"><g fill="#fff" stroke="#fff" stroke-width="0" filter="url(#b2)"><polygon points="38,7 122,6 122,52 74,50 44,40"/></g></mask><g mask="url(#nm13)" style="mix-blend-mode:overlay" opacity="0.0"><rect width="100%" height="100%" filter="url(#nz)"/></g><g mask="url(#nm13)" style="mix-blend-mode:soft-light" opacity="0"><rect width="100%" height="100%" filter="url(#nzl)"/></g><g mask="url(#nm13)" opacity="0.55"><rect width="100%" height="100%" filter="url(#sp)"/></g><rect x="7" y="24" width="7" height="3.5" rx="1" fill="#e4e0e0" filter="url(#b05)"/><rect x="9" y="31" width="6" height="3" rx="1" fill="#e4e0e0" filter="url(#b05)"/><rect x="4" y="38" width="5" height="3" rx="1" fill="#e4e0e0" filter="url(#b05)"/><rect x="20" y="45" width="6" height="3" rx="1" fill="#e4e0e0" filter="url(#b05)"/><rect x="58" y="39" width="9" height="3" rx="1" fill="#e4e0e0" filter="url(#b05)"/><rect x="78" y="46" width="7" height="4" rx="1" fill="#e4e0e0" filter="url(#b05)"/><rect x="26" y="20" width="5" height="2.5" rx="1" fill="#e4e0e0" filter="url(#b05)"/><path d="M70,56 L74,52 L80,54 L76,58 Z" fill="#2a8a40"/><path d="M74,52 L80,54 L79,56 Z" fill="#d02020"/><rect x="22" y="50" width="6" height="2" fill="#d04030"/><rect x="40" y="44" width="4" height="2" fill="#d03030"/><polygon points="74,51 92,47 104,50 106,62 76,64" fill="#0a0a0c" filter="url(#b1)"/><circle cx="76" cy="60" r="2.200" fill="#fff" filter="url(#b05)"/><circle cx="84.500" cy="60.600" r="2.300" fill="#fff" filter="url(#b05)"/><circle cx="98.400" cy="57.700" r="2.400" fill="#fff8e0" filter="url(#b05)"/><circle cx="76" cy="60" r="4" fill="#fff" filter="url(#b2)" opacity=".5"/><circle cx="84.500" cy="60.600" r="4" fill="#fff" filter="url(#b2)" opacity=".5"/><circle cx="98.400" cy="57.700" r="4.500" fill="#fff" filter="url(#b2)" opacity=".5"/><ellipse cx="114" cy="62.500" rx="10" ry="6.500" fill="#bcb29c" filter="url(#b05)"/><path d="M106,62 Q112,56 120,58" stroke="#2a2a3a" stroke-width="1.600" fill="none"/><circle cx="110" cy="64" r="1.400" fill="#33364a"/></svg></div>
<div class="im" style="left:386.75px;top:144.7px;height:68.6px"><svg viewBox="0 0 122 68.6" width="122" height="68.6" preserveAspectRatio="none" style="display:block;width:122.3px;height:68.6px"><defs><linearGradient id="g42" x1="0" y1="0" x2="0" y2="1"><stop offset="0" stop-color="#584e44"/><stop offset=".65" stop-color="#6a5b4d"/><stop offset="1" stop-color="#5f5347"/></linearGradient></defs><rect width="122" height="68.6" fill="#594f47"/><rect x="80" width="42" height="68.6" fill="url(#g42)"/><ellipse cx="20" cy="32" rx="16" ry="22" fill="#60564e" filter="url(#b5)" opacity=".7"/><rect x="41.6" y="0" width="38.6" height="68.6" fill="#060607"/><svg x="41.6" y="0" width="38.6" height="68.6" viewBox="0 0 39 69" preserveAspectRatio="none"><polygon points="0,30 39,26 39,69 0,69" fill="#5a5a56" filter="url(#b1)"/><polygon points="39,44 39,69 12,69 26,56" fill="#5e4c42" filter="url(#b1)"/><rect x="0" y="26" width="16" height="4" fill="#2a5ea8" filter="url(#b1)"/><ellipse cx="30" cy="36" rx="7" ry="3" fill="#f08030" filter="url(#b1)" opacity=".9"/><ellipse cx="27" cy="41" rx="6" ry="2" fill="#f0b040" filter="url(#b1)" opacity=".8"/><rect x="2" y="46" width="9" height="4" fill="#c8d4cc" filter="url(#b05)"/><mask id="nm14" maskUnits="userSpaceOnUse" x="-10" y="-10" width="400" height="400"><g fill="#fff" stroke="#fff" stroke-width="0" filter="url(#b1)"><polygon points="0,29 39,25 39,69 0,69"/></g></mask><g mask="url(#nm14)" style="mix-blend-mode:overlay" opacity="0.576"><rect width="100%" height="100%" filter="url(#nz)"/></g><g mask="url(#nm14)" style="mix-blend-mode:soft-light" opacity="0.45"><rect width="100%" height="100%" filter="url(#nzl)"/></g><circle cx="5" cy="17" r=".7" fill="#dfe"/><circle cx="10" cy="19" r=".7" fill="#fff"/><circle cx="18" cy="15" r=".7" fill="#8af"/><circle cx="28" cy="14" r=".7" fill="#fda"/><circle cx="34" cy="16" r=".7" fill="#fff"/><circle cx="14" cy="21" r=".7" fill="#88f"/></svg></svg></div>
<div class="im" style="left:386.75px;top:217.39999999999998px;height:68.4px"><svg viewBox="0 0 122 68.4" width="122" height="68.4" preserveAspectRatio="none" style="display:block;width:122.3px;height:68.4px"><rect width="122" height="68.4" fill="#1c2223"/><polygon points="0,20 41,12 41,30 0,30" fill="#3c2a22" filter="url(#b1)"/><rect x="0" y="30" width="41" height="16" fill="#4a5254" filter="url(#b2)" opacity=".6"/><rect x="0" y="46" width="41" height="23" fill="#262c30" filter="url(#b1)"/><rect x="2" y="16" width="7" height="5" fill="#8a8e90" filter="url(#b05)"/><rect x="41" y="0" width="39.5" height="68.4" fill="#141a1e"/><polygon points="41,22 58,26 80.5,8 80.5,36 41,36" fill="#0a0e0c" filter="url(#b1)"/><rect x="41" y="32" width="39.500" height="8" fill="#b8c8c4" filter="url(#b1)"/><polygon points="41,39 80.5,39 80.5,68.4 41,68.4" fill="#7a6460" filter="url(#b1)"/><polygon points="41,60 52,66 54,68.4 41,68.4" fill="#181a1c"/><circle cx="49" cy="25" r="1.2" fill="#fff"/><rect x="62" y="33" width="8" height="3" fill="#4a7ad8" filter="url(#b05)"/><rect x="80.5" y="0" width="41.5" height="68.4" fill="#181e1c"/><polygon points="84,36 122,28 122,52 84,56" fill="#3e4646" filter="url(#b2)" opacity=".7"/><rect x="80.5" y="52" width="41.500" height="17" fill="#1e2424" filter="url(#b1)"/><mask id="nm15" maskUnits="userSpaceOnUse" x="-10" y="-10" width="400" height="400"><g fill="#fff" stroke="#fff" stroke-width="0" filter="url(#b1)"><polygon points="0,30 41,30 41,38 80.5,38 80.5,30 122,28 122,68.4 0,68.4"/></g></mask><g mask="url(#nm15)" style="mix-blend-mode:overlay" opacity="0.576"><rect width="100%" height="100%" filter="url(#nz)"/></g><g mask="url(#nm15)" style="mix-blend-mode:soft-light" opacity="0.45"><rect width="100%" height="100%" filter="url(#nzl)"/></g></svg></div>
<div class="im" style="left:386.75px;top:289.70000000000005px;height:66.3px"><svg viewBox="0 0 122 66.3" width="122" height="66.3" preserveAspectRatio="none" style="display:block;width:122.3px;height:66.3px"><rect width="122" height="56" fill="#030304"/><rect x="100" y="30" width="22" height="26" fill="#0a0c12" filter="url(#b3)"/></svg></div>
<div class="im" style="left:513px;top:72px;height:103.8px"><svg viewBox="0 0 122 103.8" width="122" height="103.8" preserveAspectRatio="none" style="display:block;width:122.3px;height:103.8px"><rect width="122" height="103.8" fill="#08080a"/><polygon points="0,4 14,14 28,40 46,86 50,103.8 0,103.8" fill="#4c4540" filter="url(#b1)"/><polygon points="0,50 20,40 40,103.8 0,103.8" fill="#5a524a" filter="url(#b3)" opacity=".7"/><polygon points="14,0 44,0 70,22 96,46 122,76 122,103.8 50,103.8 46,84 34,46 22,18" fill="#5c6269" filter="url(#b2)"/><polygon points="34,4 50,8 84,44 112,80 110,96 76,72 52,40" fill="#868e98" filter="url(#b3)" opacity=".65"/><path d="M27,0 Q36,14 44,34 T62,74 T80,103" stroke="#4a463e" stroke-width="9" fill="none" filter="url(#b1)"/><path d="M27,0 Q34,12 40,26" stroke="#ffd0a0" stroke-width="2" fill="none" filter="url(#b05)"/><polygon points="0,0 14,0 22,16 30,40 22,36 10,14 0,6" fill="#1a1a1c" filter="url(#b1)"/><polygon points="56,0 122,0 122,70 100,44 82,24" fill="#070709" filter="url(#b1)"/><polygon points="80,28 96,40 118,62 122,80 104,62 84,40" fill="#8c9ca4" filter="url(#b1)" opacity=".55"/><mask id="nm16" maskUnits="userSpaceOnUse" x="-10" y="-10" width="400" height="400"><g fill="#fff" stroke="#fff" stroke-width="0" filter="url(#b2)"><polygon points="14,0 46,0 122,72 122,103.8 50,103.8 34,46"/></g></mask><g mask="url(#nm16)" style="mix-blend-mode:overlay" opacity="0.576"><rect width="100%" height="100%" filter="url(#nz)"/></g><g mask="url(#nm16)" style="mix-blend-mode:soft-light" opacity="0.45"><rect width="100%" height="100%" filter="url(#nzl)"/></g><g mask="url(#nm16)" opacity="0.4"><rect width="100%" height="100%" filter="url(#sp)"/></g><rect x="44" y="40" width="7" height="3.5" rx="1" fill="#c8b8a0" transform="rotate(62 47.5 41.75)" filter="url(#b05)"/><rect x="50" y="52" width="7" height="3.5" rx="1" fill="#d8d0c0" transform="rotate(62 53.5 53.75)" filter="url(#b05)"/><rect x="54" y="62" width="8" height="4" rx="1" fill="#c8c0b0" transform="rotate(62 58.0 64.0)" filter="url(#b05)"/><rect x="60" y="74" width="8" height="4" rx="1" fill="#d8c8c0" transform="rotate(60 64.0 76.0)" filter="url(#b05)"/><rect x="66" y="86" width="12" height="5" rx="1" fill="#c83030" transform="rotate(58 72.0 88.5)" filter="url(#b05)"/><rect x="70" y="98" width="10" height="4" rx="1" fill="#e8e0d8" transform="rotate(55 75.0 100.0)" filter="url(#b05)"/><rect x="40" y="30" width="6" height="3" rx="1" fill="#c8b088" transform="rotate(64 43.0 31.5)" filter="url(#b05)"/><circle cx="107" cy="62" r="2" fill="#fff" filter="url(#b05)"/><rect x="104" y="70" width="9" height="6" fill="#4a9a58" transform="rotate(40 108 73)" filter="url(#b05)"/><rect x="110" y="78" width="10" height="7" fill="#c8d0d0" transform="rotate(40 115 81)" filter="url(#b05)"/><path d="M62,38 L78,48" stroke="#8070e0" stroke-width="1.4" filter="url(#b05)"/><rect x="76" y="28" width="6" height="8" fill="#8a8040" transform="rotate(-30 79 32)" filter="url(#b05)"/></svg></div>
<div class="im" style="left:513px;top:179.8px;height:73.5px"><svg viewBox="0 0 122 73.5" width="122" height="73.5" preserveAspectRatio="none" style="display:block;width:122.3px;height:73.5px"><rect width="122" height="73.5" fill="#3e3634"/><rect x="0" y="0" width="122" height="14" fill="#5a4e48" filter="url(#b3)"/><ellipse cx="108" cy="8" rx="22" ry="10" fill="#b09678" filter="url(#b5)" opacity=".85"/><rect x="0" y="48" width="122" height="26" fill="#645c5a" filter="url(#b3)" opacity=".75"/><rect x="0" y="64" width="122" height="10" fill="#4a4244" filter="url(#b2)" opacity=".8"/><polygon points="0,16 8,16 10,34 26,42 12,54 10,73.5 0,73.5" fill="#161616" filter="url(#b1)"/><mask id="nm17" maskUnits="userSpaceOnUse" x="-10" y="-10" width="400" height="400"><g fill="#fff" stroke="#fff" stroke-width="0" filter="url(#b1)"><polygon points="0,0 122,0 122,73.5 0,73.5"/></g></mask><g mask="url(#nm17)" style="mix-blend-mode:overlay" opacity="0.612"><rect width="100%" height="100%" filter="url(#nz)"/></g><g mask="url(#nm17)" style="mix-blend-mode:soft-light" opacity="0.45"><rect width="100%" height="100%" filter="url(#nzl)"/></g><g mask="url(#nm17)" opacity="0.4"><rect width="100%" height="100%" filter="url(#sp)"/></g><circle cx="14" cy="31" r="4.2" fill="#ffb050" filter="url(#b2)" opacity=".7"/><circle cx="14" cy="31" r="2.2" fill="#fff2d0" filter="url(#b05)"/><circle cx="28" cy="37.5" r="4" fill="#ffb050" filter="url(#b2)" opacity=".7"/><circle cx="28" cy="37.5" r="2" fill="#fff2d0" filter="url(#b05)"/><circle cx="17" cy="42" r="3.8" fill="#ffb050" filter="url(#b2)" opacity=".7"/><circle cx="17" cy="42" r="1.8" fill="#fff2d0" filter="url(#b05)"/><circle cx="93" cy="9" r="3.6" fill="#ffb050" filter="url(#b2)" opacity=".7"/><circle cx="93" cy="9" r="1.6" fill="#fff2d0" filter="url(#b05)"/><circle cx="112" cy="14" r="3.4" fill="#ffb050" filter="url(#b2)" opacity=".7"/><circle cx="112" cy="14" r="1.4" fill="#fff2d0" filter="url(#b05)"/><circle cx="116" cy="6" r="3.2" fill="#ffb050" filter="url(#b2)" opacity=".7"/><circle cx="116" cy="6" r="1.2" fill="#fff2d0" filter="url(#b05)"/><rect x="0" y="37" width="12" height="3" fill="#d8d8d8" filter="url(#b05)"/><rect x="2" y="48" width="8" height="4" fill="#e8e8e8" filter="url(#b05)"/><rect x="52" y="2" width="2" height="3" fill="#2a8a40"/><rect x="50" y="5" width="3" height="2" fill="#c82020"/><rect x="108" y="40" width="4" height="3" fill="#c82828"/><rect x="46" y="14" width="3" height="2" fill="#b82020"/></svg></div>
<div class="im" style="left:513px;top:257.2px;height:68.2px"><svg viewBox="0 0 122 68.2" width="122" height="68.2" preserveAspectRatio="none" style="display:block;width:122.3px;height:68.2px"><rect width="122" height="68.2" fill="#1a1c1e"/><rect x="8" y="4" width="24" height="14" fill="#22262c" filter="url(#b1)"/><rect x="52" y="6" width="24" height="8" fill="#8a8478" filter="url(#b1)"/><rect x="80" y="2" width="28" height="12" fill="#4a4030" filter="url(#b2)"/><path d="M0,20 L60,16 L122,12.500" stroke="#e8e0d0" stroke-width="3.2" filter="url(#b1)"/><polygon points="0,21 60,18 122,14 122,24 96,40 70,54 40,68.2 0,68.2" fill="#5e5856" filter="url(#b1)"/><polygon points="0,21 60,18 122,14 122,20 60,30 0,34" fill="#8a807c" filter="url(#b2)" opacity=".8"/><polygon points="0,40 40,44 60,56 36,68.2 0,68.2" fill="#3e3a3a" filter="url(#b3)" opacity=".85"/><polygon points="122,22 122,68.2 26,68.2 52,58 80,44 104,30" fill="#1a1f1b" filter="url(#b05)"/><path d="M122,22 L104,31 L80,45 L52,59 L28,68.2" stroke="#c8ccd0" stroke-width="1.6" fill="none" filter="url(#b05)" opacity=".8"/><path d="M122,30 L60,62" stroke="#4a524c" stroke-width="1" opacity=".8"/><path d="M122,40 L76,68" stroke="#3a423c" stroke-width="1" opacity=".8"/><mask id="nm18" maskUnits="userSpaceOnUse" x="-10" y="-10" width="400" height="400"><g fill="#fff" stroke="#fff" stroke-width="0" filter="url(#b1)"><polygon points="0,20 122,13 122,22 28,68.2 0,68.2"/></g></mask><g mask="url(#nm18)" style="mix-blend-mode:overlay" opacity="0.576"><rect width="100%" height="100%" filter="url(#nz)"/></g><g mask="url(#nm18)" style="mix-blend-mode:soft-light" opacity="0.45"><rect width="100%" height="100%" filter="url(#nzl)"/></g><g mask="url(#nm18)" opacity="0.4"><rect width="100%" height="100%" filter="url(#sp)"/></g><circle cx="10" cy="4" r="1.4" fill="#fff" filter="url(#b05)"/><circle cx="14" cy="8" r="1" fill="#46f" filter="url(#b05)"/><circle cx="86" cy="7" r="1.6" fill="#fff" filter="url(#b05)"/><circle cx="96" cy="5" r="1" fill="#fa6" filter="url(#b05)"/><circle cx="112" cy="9" r="1" fill="#fff" filter="url(#b05)"/><circle cx="62" cy="8" r="1.2" fill="#eef" filter="url(#b05)"/><circle cx="70" cy="7" r="1" fill="#fff" filter="url(#b05)"/><circle cx="44" cy="14" r="1" fill="#fc6" filter="url(#b05)"/><circle cx="30" cy="17" r="1" fill="#fff" filter="url(#b05)"/><circle cx="4" cy="19" r="1" fill="#f64" filter="url(#b05)"/><rect x="13.4" y="6" width=".9" height="14" fill="#6a7ac8"/></svg></div>
<div class="im" style="left:513px;top:330px;height:26px"><svg viewBox="0 0 122 26" width="122" height="26" preserveAspectRatio="none" style="display:block;width:122.3px;height:26px"><rect width="122" height="16" fill="#12202a"/><rect x="20" y="0" width="60" height="8" fill="#1c3a2c" filter="url(#b2)"/><rect x="38" y="0" width="28" height="2.500" fill="#3a8064" filter="url(#b05)"/><polygon points="90,0 122,0 122,16 76,16" fill="#7a6e48" filter="url(#b05)"/><polygon points="60,10 76,8 72,16 58,16" fill="#5a5a40" filter="url(#b05)"/><path d="M42,10 Q46,4 50,9 L50,16 L42,16 Z" fill="#9ac0d0" filter="url(#b05)"/><circle cx="7" cy="4.500" r="1.3" fill="#cfe8ff" filter="url(#b05)"/><path d="M100,16 L118,2 M108,16 L122,6" stroke="#8a8458" stroke-width="1"/></svg></div>

  </main>
  <div id="botline"></div>
</div>
</body>
</html>
